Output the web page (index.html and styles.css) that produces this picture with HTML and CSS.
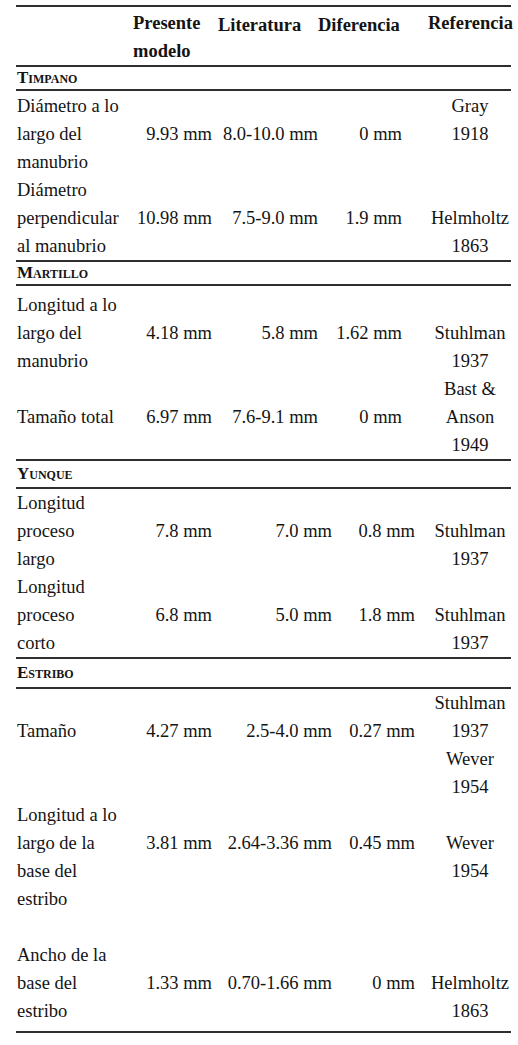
FILE: index.html
```html
<!DOCTYPE html>
<html>
  <head>
    <meta charset="utf-8" />
    <title>Dimensiones de los huesecillos</title>
    <link rel="stylesheet" href="styles.css">
  </head>
  <body>
    <table class="dims">
      <colgroup>
        <col class="c-name"><col class="c-model"><col class="c-lit"><col class="c-diff"><col class="c-ref">
      </colgroup>
      <thead>
        <tr>
          <th></th>
          <th class="model">Presente<br>modelo</th>
          <th class="lit">Literatura</th>
          <th class="diff">Diferencia</th>
          <th class="ref">Referencia</th>
        </tr>
      </thead>
      <tbody>
        <tr class="sec"><td colspan="5" class="short">Timpano</td></tr>
        <tr class="early pt1">
          <td>Diámetro a lo<br>largo del<br>manubrio</td>
          <td>9.93 mm</td>
          <td>8.0-10.0 mm</td>
          <td>0 mm</td>
          <td class="top">Gray<br>1918</td>
        </tr>
        <tr class="early">
          <td>Diámetro<br>perpendicular<br>al manubrio</td>
          <td>10.98 mm</td>
          <td>7.5-9.0 mm</td>
          <td>1.9 mm</td>
          <td class="bot">Helmholtz<br>1863</td>
        </tr>

        <tr class="sec next"><td colspan="5" class="short">Martillo</td></tr>
        <tr class="early pt5">
          <td>Longitud a lo<br>largo del<br>manubrio</td>
          <td>4.18 mm</td>
          <td>5.8 mm</td>
          <td>1.62 mm</td>
          <td class="bot">Stuhlman<br>1937</td>
        </tr>
        <tr class="early">
          <td>Tamaño total</td>
          <td>6.97 mm</td>
          <td>7.6-9.1 mm</td>
          <td>0 mm</td>
          <td>Bast &amp;<br>Anson<br>1949</td>
        </tr>

        <tr class="sec next"><td colspan="5" class="mid">Yunque</td></tr>
        <tr>
          <td>Longitud<br>proceso<br>largo</td>
          <td>7.8 mm</td>
          <td>7.0 mm</td>
          <td>0.8 mm</td>
          <td class="bot">Stuhlman<br>1937</td>
        </tr>
        <tr>
          <td>Longitud<br>proceso<br>corto</td>
          <td>6.8 mm</td>
          <td>5.0 mm</td>
          <td>1.8 mm</td>
          <td class="bot">Stuhlman<br>1937</td>
        </tr>

        <tr class="sec next"><td colspan="5" class="tall">Estribo</td></tr>
        <tr>
          <td class="second">Tamaño</td>
          <td class="second">4.27 mm</td>
          <td class="second">2.5-4.0 mm</td>
          <td class="second">0.27 mm</td>
          <td class="top">Stuhlman<br>1937<br>Wever<br>1954</td>
        </tr>
        <tr class="gap">
          <td class="top">Longitud a lo<br>largo de la<br>base del<br>estribo</td>
          <td class="second">3.81 mm</td>
          <td class="second">2.64-3.36 mm</td>
          <td class="second">0.45 mm</td>
          <td class="second">Wever<br>1954</td>
        </tr>
        <tr class="last">
          <td>Ancho de la<br>base del<br>estribo</td>
          <td>1.33 mm</td>
          <td>0.70-1.66 mm</td>
          <td>0 mm</td>
          <td class="bot">Helmholtz<br>1863</td>
        </tr>
      </tbody>
    </table>
  </body>
</html>
```

FILE: styles.css
```css
body {
  margin: 5px 0 0 16px;
  background-color: #fff;
  color: #141414;
  font-family: "Liberation Serif", "Times New Roman", serif;
  font-size: 18.5px;
  line-height: 28px;
}
.dims {
  width: 495px;
  table-layout: fixed;
  border-collapse: separate;
  border-spacing: 0;
}
.c-name { width: 115px; }
.c-model { width: 85px; }
.c-lit { width: 118px; }
.c-diff { width: 83px; }
.c-ref { width: 94px; }

.dims th {
  padding: 2px 0 0 0;
  text-align: left;
  vertical-align: top;
  font-weight: bold;
  white-space: nowrap;
  border-top: 2px solid #2e2e2e;
  border-bottom: 2px solid #2e2e2e;
}
.dims th.model {
  padding-left: 2px;
}
.dims th.lit {
  padding: 4px 0 0 2px;
}
.dims th.diff {
  padding-top: 4px;
  text-indent: -16px;
}
.dims th.ref {
  padding-left: 11px;
}

.dims td {
  padding: 0;
  vertical-align: middle;
  white-space: nowrap;
}
.dims td:nth-child(1) {
  padding-left: 1px;
}
.dims td:nth-child(2) {
  text-align: right;
  padding-right: 4px;
}
.dims td:nth-child(3),
.dims td:nth-child(4) {
  text-align: right;
  padding-right: 2px;
}
.early td:nth-child(3) {
  padding-right: 16px;
}
.early td:nth-child(4) {
  padding-right: 15px;
}
.dims td:nth-child(5) {
  text-align: center;
  padding-left: 12px;
}

.sec td {
  font-weight: bold;
  font-variant: small-caps;
  font-size: 17px;
  border-bottom: 2px solid #2e2e2e;
}
.sec.next td {
  border-top: 2px solid #2e2e2e;
}
.sec .short { line-height: 22px; }
.sec .mid { line-height: 26px; }
.sec .tall { line-height: 28px; }

.top { vertical-align: top !important; }
.bot { vertical-align: bottom !important; }
.second {
  vertical-align: top !important;
  padding-top: 28px !important;
}

.pt1 td { padding-top: 1px; }
.pt5 td { padding-top: 5px; }
.gap td { padding-bottom: 28px; }
.last td {
  padding-bottom: 6px;
  border-bottom: 2px solid #2e2e2e;
}
```
